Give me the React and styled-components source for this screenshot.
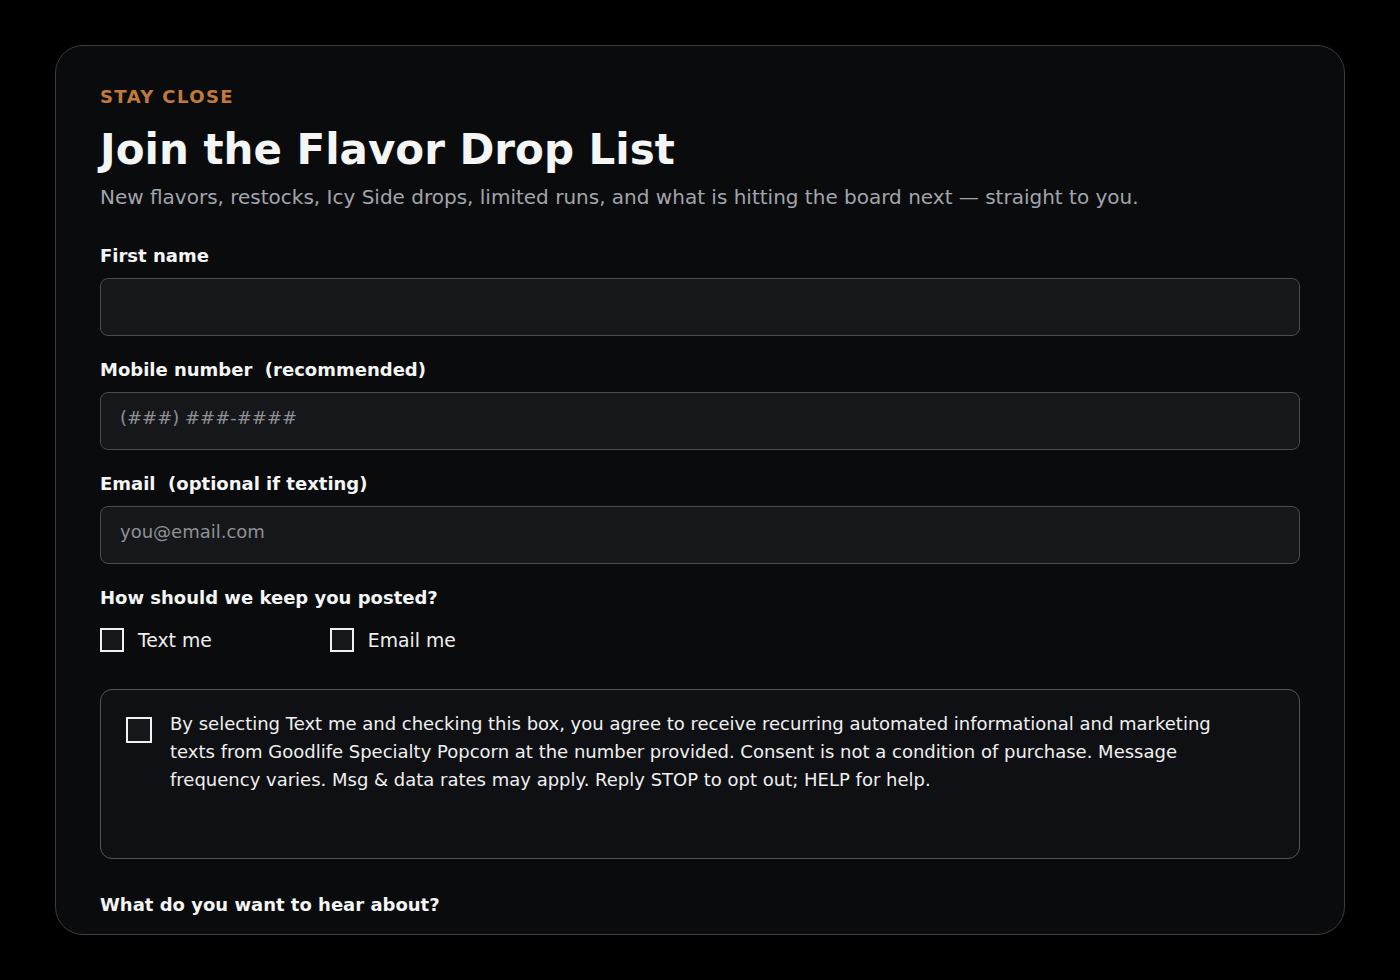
import React from "react";
import styled, { createGlobalStyle } from "styled-components";

const Global = createGlobalStyle`
  html, body { margin: 0; padding: 0; background: #000; height: 100%; }
  body { font-family: "DejaVu Sans", Verdana, sans-serif; color: #f2f3f4; }
  * { box-sizing: border-box; }
`;

const Page = styled.div`
  height: 100vh;
  padding: 45px 55px;
`;

const Card = styled.div`
  height: 100%;
  background: #0a0b0d;
  border: 1.5px solid #3b3c3f;
  border-radius: 28px;
  padding: 38px 44px;
  overflow: hidden;
  display: flex;
  flex-direction: column;
`;

const Eyebrow = styled.div`
  color: #c27a3c;
  font-weight: 700;
  font-size: 18px;
  letter-spacing: 1.4px;
  line-height: 26px;
`;

const Title = styled.h1`
  margin: 14px 0 0;
  font-size: 42px;
  font-weight: 700;
  line-height: 52px;
  color: #f4f5f5;
`;

const Sub = styled.p`
  margin: 8px 0 0;
  font-size: 20px;
  line-height: 26px;
  color: #a2a6ac;
`;

const Field = styled.div`
  margin-top: ${(p) => p.$mt || 22}px;
  display: flex;
  flex-direction: column;
`;

const Label = styled.label`
  font-size: 18px;
  font-weight: 700;
  line-height: 24px;
  color: #f4f5f5;
  white-space: pre;
`;

const Input = styled.input`
  margin-top: 10px;
  height: 58px;
  width: 100%;
  background: #16171a;
  border: 1.5px solid #4a4c50;
  border-radius: 8px;
  padding: 0 19px 7px;
  font-family: inherit;
  font-size: 18px;
  color: #f0f0f0;
  outline: none;
  &::placeholder { color: #8e9196; }
`;

const Options = styled.div`
  margin-top: 18px;
  display: flex;
  gap: 118px;
`;

const Option = styled.label`
  display: flex;
  align-items: center;
  gap: 14px;
  font-size: 18.8px;
  color: #f0f0f0;
`;

const Box = styled.span`
  width: ${(p) => p.$size || 24}px;
  height: ${(p) => p.$size || 24}px;
  margin-top: ${(p) => p.$mt || 0}px;
  border: 2px solid #f2f2f2;
  background: #16171a;
  flex: none;
`;

const Consent = styled.div`
  margin-top: 37px;
  min-height: 170px;
  background: #0f1013;
  border: 1.5px solid #525458;
  border-radius: 12px;
  padding: 20px 24px 20px 25px;
  display: flex;
  gap: 18px;
  align-items: flex-start;
`;

const ConsentText = styled.p`
  margin: 0;
  font-size: 18px;
  line-height: 28px;
  color: #f0f0f0;
  max-width: 1070px;
`;

export default function App() {
  return (
    <>
      <Global />
      <Page>
        <Card>
          <Eyebrow>STAY CLOSE</Eyebrow>
          <Title>Join the Flavor Drop List</Title>
          <Sub>
            New flavors, restocks, Icy Side drops, limited runs, and what is hitting the board next — straight to you.
          </Sub>
          <Field $mt={34}>
            <Label>First name</Label>
            <Input type="text" />
          </Field>
          <Field>
            <Label>Mobile number  (recommended)</Label>
            <Input type="tel" placeholder="(###) ###-####" />
          </Field>
          <Field>
            <Label>Email  (optional if texting)</Label>
            <Input type="email" placeholder="you@email.com" />
          </Field>
          <Field>
            <Label>How should we keep you posted?</Label>
            <Options>
              <Option><Box />Text me</Option>
              <Option><Box />Email me</Option>
            </Options>
          </Field>
          <Consent>
            <Box $size={26} $mt={7} />
            <ConsentText>
              By selecting Text me and checking this box, you agree to receive recurring automated informational and marketing texts from Goodlife Specialty Popcorn at the number provided. Consent is not a condition of purchase. Message frequency varies. Msg &amp; data rates may apply. Reply STOP to opt out; HELP for help.
            </ConsentText>
          </Consent>
          <Field $mt={34}>
            <Label>What do you want to hear about?</Label>
          </Field>
        </Card>
      </Page>
    </>
  );
}
